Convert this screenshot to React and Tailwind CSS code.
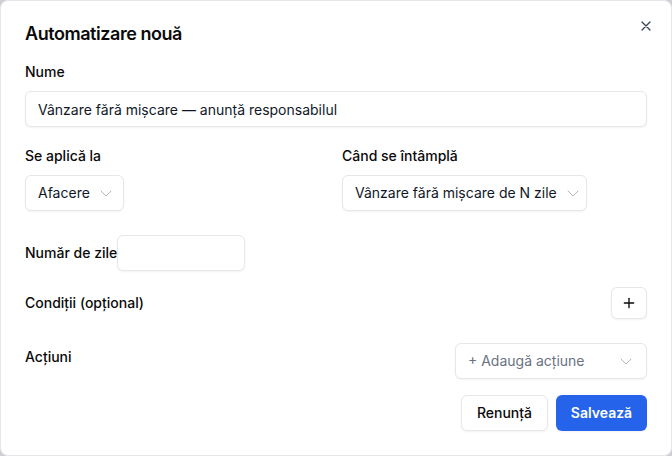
import React from 'react';
import { Plus } from 'lucide-react';

const Chevron = () => (
  <svg width="16" height="16" viewBox="0 0 16 16" fill="none" className="shrink-0 text-[#b3b5ba]">
    <path d="M3 6l5 5 5-5" stroke="currentColor" strokeWidth="1" strokeLinecap="round" strokeLinejoin="round" />
  </svg>
);

const Select = ({ value, placeholder, className = '' }) => (
  <button
    type="button"
    className={`h-9 flex items-center gap-2 rounded-md border border-gray-200 bg-white pl-3 pr-3 text-sm shadow-xs ${className}`}
  >
    <span className={`flex-1 text-left whitespace-nowrap ${placeholder ? 'text-gray-500' : 'text-gray-900'}`}>
      {value || placeholder}
    </span>
    <Chevron />
  </button>
);

const Label = ({ children, className = '' }) => (
  <label className={`block text-sm font-medium leading-none text-[#0a0a0a] ${className}`}>{children}</label>
);

export default function App() {
  return (
    <div className="min-h-screen bg-[#cfd0d4] font-['Inter','Noto_Sans',sans-serif]">
      <div className="relative flex flex-col rounded-lg border border-gray-200 bg-white p-6">
        {/* close */}
        <button type="button" className="absolute right-[20px] top-[20px] text-gray-700">
          <svg width="10" height="10" viewBox="0 0 10 10" fill="none">
            <path d="M1 1l8 8M9 1l-8 8" stroke="currentColor" strokeWidth="1.3" strokeLinecap="round" />
          </svg>
        </button>

        <h2 className="text-lg font-semibold leading-none tracking-tight text-[#0a0a0a]">Automatizare nouă</h2>

        <Label className="mt-[22px]">Nume</Label>
        <input
          readOnly
          value="Vânzare fără mișcare — anunță responsabilul"
          className="mt-3 h-9 w-full rounded-md border border-gray-200 bg-white px-3 text-sm text-gray-900 shadow-xs outline-none"
        />

        <div className="mt-[22px] grid grid-cols-2 gap-3">
          <div>
            <Label>Se aplică la</Label>
            <div className="mt-3 flex">
              <Select value="Afacere" className="w-[99px]" />
            </div>
          </div>
          <div>
            <Label>Când se întâmplă</Label>
            <div className="mt-3 flex">
              <Select value="Vânzare fără mișcare de N zile" className="w-[245px]" />
            </div>
          </div>
        </div>

        <div className="mt-6 flex items-center">
          <Label>Număr de zile</Label>
          <input
            readOnly
            className="h-9 w-32 rounded-md border border-gray-200 bg-white px-3 text-sm shadow-xs outline-none"
          />
        </div>

        <div className="mt-4 flex items-center justify-between">
          <Label>Condiții (opțional)</Label>
          <button
            type="button"
            className="flex h-8 w-9 items-center justify-center rounded-md border border-gray-200 bg-white text-[#0a0a0a] shadow-xs"
          >
            <Plus size={16} strokeWidth={2} />
          </button>
        </div>

        <div className="mt-6 flex items-start justify-between">
          <Label className="mt-[7px]">Acțiuni</Label>
          <Select placeholder="+ Adaugă acțiune" className="w-48" />
        </div>

        <div className="mt-4 flex justify-end gap-2">
          <button
            type="button"
            className="h-9 w-[87px] rounded-md border border-gray-200 bg-white text-sm font-medium text-[#0a0a0a] shadow-xs"
          >
            Renunță
          </button>
          <button
            type="button"
            className="h-9 w-[91px] rounded-md bg-[#2563eb] text-sm font-semibold text-white shadow-xs"
          >
            Salvează
          </button>
        </div>
      </div>
    </div>
  );
}
